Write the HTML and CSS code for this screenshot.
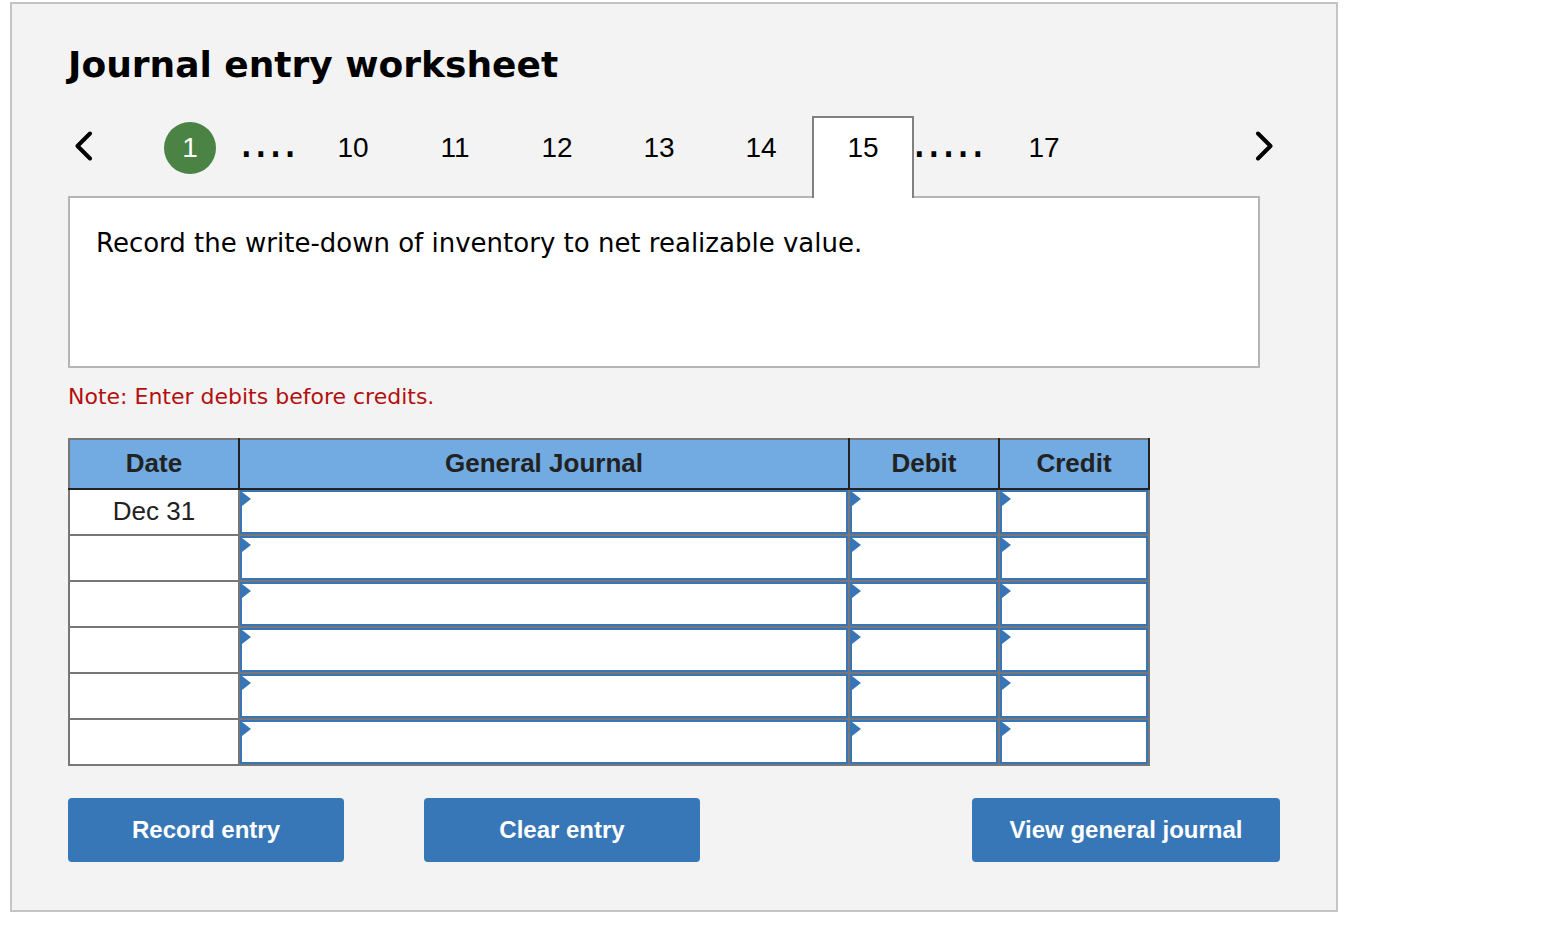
FILE: index.html
```html
<!DOCTYPE html>
<html lang="en">
	<head>
		<meta charset="UTF-8">
		<title>Journal entry worksheet</title>
		<link rel="stylesheet" href="styles.css">
	</head>
	<body>
		<div class="worksheet">
			<h1>Journal entry worksheet</h1>
			<nav class="tabs">
				<button class="arrow prev" type="button" aria-label="Previous">
					<svg width="18" height="30" viewBox="0 0 18 30"><path d="M15 2.500L2.500 15L15 27.500"/></svg>
				</button>
				<a class="tab" href="#"><span class="done">1</span></a>
				<span class="dots">....</span>
				<a class="tab" href="#">10</a>
				<a class="tab" href="#">11</a>
				<a class="tab" href="#">12</a>
				<a class="tab" href="#">13</a>
				<a class="tab" href="#">14</a>
				<a class="tab current" href="#">15</a>
				<span class="dots long">.....</span>
				<a class="tab" href="#">17</a>
				<button class="arrow next" type="button" aria-label="Next">
					<svg width="18" height="30" viewBox="0 0 18 30"><path d="M3 2.500L15.500 15L3 27.500"/></svg>
				</button>
			</nav>
			<div class="question">Record the write-down of inventory to net realizable value.</div>
			<p class="note">Note: Enter debits before credits.</p>
			<table class="journal">
				<thead>
					<tr>
						<th class="date">Date</th>
						<th>General Journal</th>
						<th class="amount">Debit</th>
						<th class="amount">Credit</th>
					</tr>
				</thead>
				<tbody>
					<tr>
						<td>Dec 31</td>
						<td><div class="entry"><input type="text" aria-label="General Journal 1"></div></td>
						<td><div class="entry"><input type="text" aria-label="Debit 1"></div></td>
						<td><div class="entry"><input type="text" aria-label="Credit 1"></div></td>
					</tr>
					<tr>
						<td></td>
						<td><div class="entry"><input type="text" aria-label="General Journal 2"></div></td>
						<td><div class="entry"><input type="text" aria-label="Debit 2"></div></td>
						<td><div class="entry"><input type="text" aria-label="Credit 2"></div></td>
					</tr>
					<tr>
						<td></td>
						<td><div class="entry"><input type="text" aria-label="General Journal 3"></div></td>
						<td><div class="entry"><input type="text" aria-label="Debit 3"></div></td>
						<td><div class="entry"><input type="text" aria-label="Credit 3"></div></td>
					</tr>
					<tr>
						<td></td>
						<td><div class="entry"><input type="text" aria-label="General Journal 4"></div></td>
						<td><div class="entry"><input type="text" aria-label="Debit 4"></div></td>
						<td><div class="entry"><input type="text" aria-label="Credit 4"></div></td>
					</tr>
					<tr>
						<td></td>
						<td><div class="entry"><input type="text" aria-label="General Journal 5"></div></td>
						<td><div class="entry"><input type="text" aria-label="Debit 5"></div></td>
						<td><div class="entry"><input type="text" aria-label="Credit 5"></div></td>
					</tr>
					<tr>
						<td></td>
						<td><div class="entry"><input type="text" aria-label="General Journal 6"></div></td>
						<td><div class="entry"><input type="text" aria-label="Debit 6"></div></td>
						<td><div class="entry"><input type="text" aria-label="Credit 6"></div></td>
					</tr>
				</tbody>
			</table>
			<div class="actions">
				<button class="btn" type="button">Record entry</button>
				<button class="btn" type="button">Clear entry</button>
				<button class="btn view" type="button">View general journal</button>
			</div>
		</div>
	</body>
</html>
```
FILE: styles.css
```css
*{
	padding: 0;
	margin: 0;
	box-sizing: border-box;
}
body{
	background: #fff;
	color: #000;
	font-family: "Liberation Sans", Arial, sans-serif;
}
a{
	text-decoration: none;
	color: #000;
}
.worksheet{
	max-width: 1328px;
	margin: 2px 10px 24px;
	padding: 40px 56px 48px;
	background: #f3f3f3;
	border: 2px solid #c4c4c4;
}
h1{
	font: bold 36px/42px "DejaVu Sans", Verdana, sans-serif;
}

/* page tabs */
.tabs{
	display: flex;
	margin-top: 30px;
	margin-bottom: -2px;
	position: relative;
	font-size: 28px;
	line-height: 60px;
}
.arrow{
	width: 71px;
	height: 60px;
	padding: 0 7px;
	border: none;
	background: none;
	cursor: pointer;
	display: flex;
	align-items: center;
}
.arrow path{
	fill: none;
	stroke: #000;
	stroke-width: 4;
	stroke-linecap: round;
	stroke-linejoin: round;
}
.next{
	margin-left: auto;
	justify-content: flex-end;
}
.tab{
	width: 102px;
	height: 82px;
	border: 2px solid transparent;
	border-bottom: none;
	text-align: center;
}
.current{
	background: #fff;
	border-color: #808080;
}
.done{
	display: block;
	width: 52px;
	height: 52px;
	margin: 4px auto;
	border-radius: 50%;
	background: #4a8344;
	color: #fff;
	line-height: 52px;
}
.dots{
	width: 63px;
	margin-left: -2px;
	font-family: "DejaVu Sans", Verdana, sans-serif;
	font-size: 46px;
	line-height: 50px;
}
.long{
	width: 81px;
}

.question{
	min-height: 172px;
	margin-right: 20px;
	padding: 28px 26px;
	background: #fff;
	border: 2px solid #b5b5b5;
	font: 26px/34px "DejaVu Sans", Verdana, sans-serif;
}
.note{
	margin: 14px 0 26px;
	color: #b30f0f;
	font: 22px/30px "DejaVu Sans", Verdana, sans-serif;
}

/* journal table */
.journal{
	width: 100%;
	max-width: 1082px;
	table-layout: fixed;
	border-collapse: collapse;
	color: #222;
	font-size: 26px;
	line-height: 42px;
}
.journal th{
	height: 50px;
	padding-bottom: 2px;
	background: #71abe1;
	border: 2px solid #222;
	border-top-color: #777;
}
.journal th:first-child{
	border-left-color: #777;
}
.journal td{
	height: 46px;
	background: #fff;
	border: 2px solid #777;
	text-align: center;
}
.journal td:first-child{
	padding-bottom: 2px;
}
.date{
	width: 170px;
}
.amount{
	width: 150px;
}
.entry{
	position: relative;
}
.entry:before{
	content: "";
	position: absolute;
	left: 2px;
	top: 2px;
	border-left: 9px solid #3875b7;
	border-top: 7px solid transparent;
	border-bottom: 7px solid transparent;
}
.entry input{
	display: block;
	width: 100%;
	height: 44px;
	padding: 0 12px;
	border: 2px solid #3875b7;
	border-radius: 0;
	background: #fff;
	font: inherit;
	outline: none;
}

.actions{
	display: flex;
	gap: 80px;
	margin-top: 32px;
}
.btn{
	width: 276px;
	height: 64px;
	border: none;
	border-radius: 4px;
	background: #3777b7;
	color: #fff;
	font: bold 24px "Liberation Sans", Arial, sans-serif;
	cursor: pointer;
}
.view{
	width: 308px;
	margin-left: auto;
}
```
